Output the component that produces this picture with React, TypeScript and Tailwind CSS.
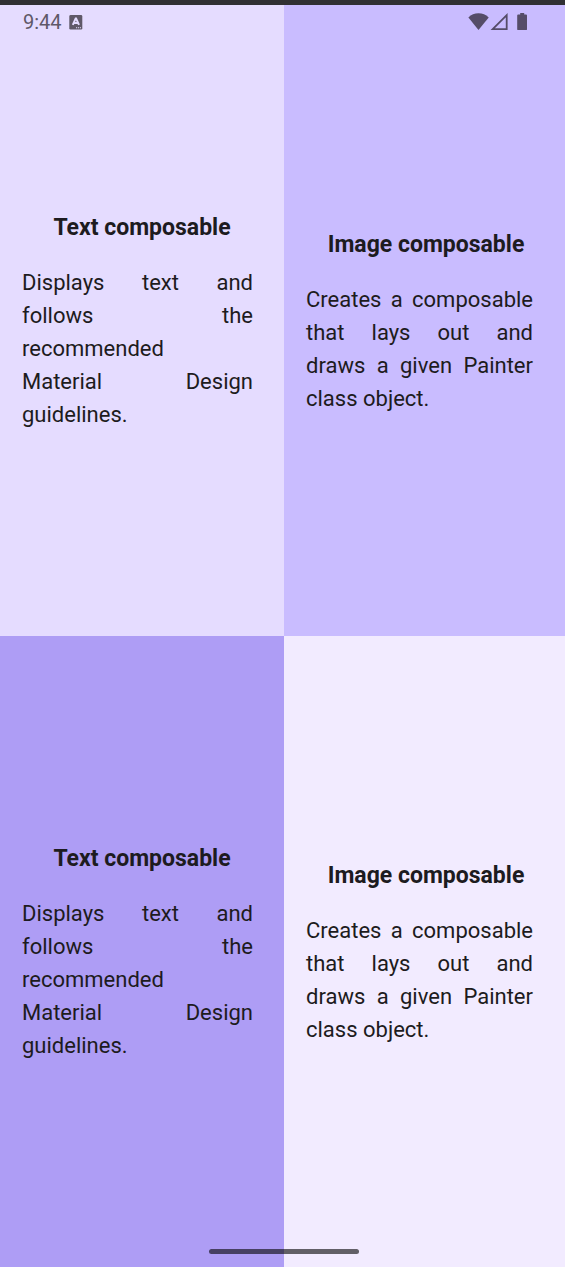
type Quadrant = { title: string; lines: string[]; tone: string; inset: string; measure: string };

const textLines = ["Displays text and", "follows the", "recommended", "Material Design", "guidelines."];
const imageLines = ["Creates a composable", "that lays out and", "draws a given Painter", "class object."];

const left = { inset: "px-[22px]", measure: "pr-[9px]" };
const right = { inset: "pl-[22px] pr-[19px]", measure: "pr-[13px]" };

const quadrants: Quadrant[] = [
  { title: "Text composable", lines: textLines, tone: "bg-[#e5dcff]", ...left },
  { title: "Image composable", lines: imageLines, tone: "bg-[#c9bcff]", ...right },
  { title: "Text composable", lines: textLines, tone: "bg-[#ae9df5]", ...left },
  { title: "Image composable", lines: imageLines, tone: "bg-[#f2ebff]", ...right },
];

function Card({ title, lines, tone, inset, measure }: Quadrant) {
  return (
    <section className={`flex flex-col justify-center pt-px ${tone} ${inset}`}>
      <h2 className="mb-[22px] text-center text-[23px] leading-[33px] font-bold">{title}</h2>
      <p className={`text-[22px] leading-[33px] ${measure}`}>
        {lines.map((line, i) => (
          <span
            key={line}
            className={i < lines.length - 1 ? "block text-justify [text-align-last:justify]" : "block"}
          >
            {line}{" "}
          </span>
        ))}
      </p>
    </section>
  );
}

function StatusBar() {
  return (
    <header className="absolute inset-x-0 top-0 flex h-[34px] items-center justify-between pr-9 pl-[23px] text-[#5f5868]">
      <div className="flex items-center gap-[7px]">
        <time className="text-[20px] leading-8">9:44</time>
        <svg className="h-[15px] w-[14px]" viewBox="0 0 14 15" aria-hidden="true">
          <rect width="13" height="14.4" x="0.3" y="0.1" rx="1.3" fill="#5f5868" />
          <path d="M3.8 9.8 6.7 3.4h.4L10 9.8M5 8h3.8" fill="none" stroke="#e5dcff" strokeWidth="2" />
          <path d="M7 12.8h1.2m.8 0h1.2m.8 0h1" stroke="#e5dcff" strokeWidth="1.1" />
        </svg>
      </div>
      <svg className="h-[18px] w-[61px]" viewBox="0 0 61 18" fill="#554c68" aria-hidden="true">
        <path d="M.4 4.4Q4.6.2 10.5.2t10.2 4.2L10.5 16.9Z" />
        <path d="M24.7 16.2 38.7 2.2v14Z" fill="none" stroke="#554c68" strokeWidth="1.8" />
        <path d="M52.2 0h4v1.6h1.9q.9 0 .9.9v13.7q0 .9-.9.9h-8q-.9 0-.9-.9V2.5q0-.9.9-.9h2.1Z" />
      </svg>
    </header>
  );
}

export default function App() {
  return (
    <div className="relative flex min-h-screen flex-col border-t-[5px] border-[#303033] bg-[#c9bcff] font-[Roboto,sans-serif] text-[#1d1b20]">
      <main className="grid flex-1 grid-cols-[284fr_281fr] grid-rows-2">
        {quadrants.map((q, i) => (
          <Card key={i} {...q} />
        ))}
      </main>
      <StatusBar />
      <div className="absolute inset-x-0 bottom-[13px] flex justify-center pl-0.5">
        <div className="h-[5px] w-[150px] rounded-full bg-[#010101]/60" />
      </div>
    </div>
  );
}
